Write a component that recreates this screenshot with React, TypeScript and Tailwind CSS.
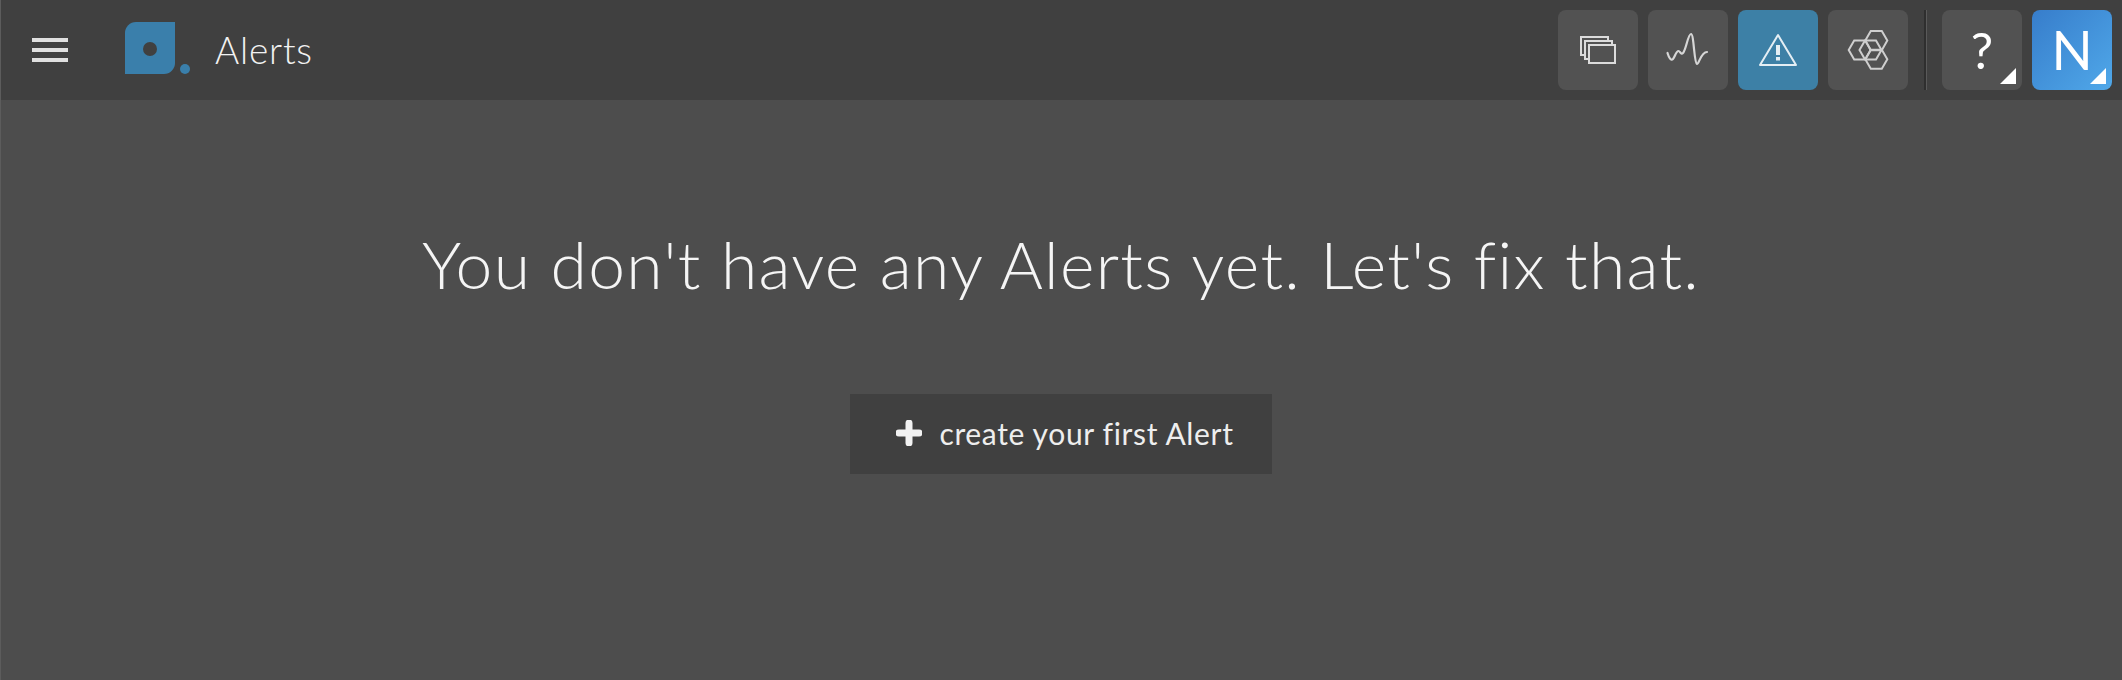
const Corner = () => (
  <svg className="absolute right-[6px] bottom-[6px]" width="16" height="16" viewBox="0 0 16 16">
    <path d="M16 0V16H0Z" fill="#ffffff" />
  </svg>
);

const hexagon = (cx: number, cy: number, r: number) => {
  const h = r * 0.866;
  return `M${cx - r} ${cy}L${cx - r / 2} ${cy - h}H${cx + r / 2}L${cx + r} ${cy}L${cx + r / 2} ${cy + h}H${cx - r / 2}Z`;
};

const NavButton: React.FC<{ active?: boolean; children: React.ReactNode }> = ({ active, children }) => (
  <div className={`relative flex h-20 w-20 items-center justify-center rounded-lg ${active ? "bg-[#3d80a6]" : "bg-[#525252]"}`}>
    {children}
  </div>
);

const App: React.FC = () => {
  return (
    <div className="flex h-[680px] w-full flex-col overflow-hidden border-l border-[#5c5c5c] bg-[#4d4d4d] font-['Lato',sans-serif] text-white">
      {/* Header */}
      <header className="flex h-[100px] shrink-0 items-center bg-[#404040] pr-[10px]">
        <div className="ml-[31px] flex w-9 flex-col gap-[6px]">
          <span className="h-1 bg-[#e0e0e0]" />
          <span className="h-1 bg-[#e0e0e0]" />
          <span className="h-1 bg-[#e0e0e0]" />
        </div>
        <svg className="mb-[2px] ml-[57px]" width="66" height="54" viewBox="0 0 66 54">
          <path d="M11 0H50V41A11 11 0 0 1 39 52H0V11A11 11 0 0 1 11 0Z" fill="#3a7fab" />
          <circle cx="25" cy="27" r="7" fill="#404040" />
          <circle cx="60" cy="47" r="5" fill="#3a7fab" />
        </svg>
        <span className="ml-[24px] text-[37px] font-light tracking-[0.8px] text-[#f2f2f2]">Alerts</span>

        <nav className="ml-auto flex items-center gap-[10px]">
          <NavButton>
            <svg width="80" height="80" viewBox="0 0 80 80" fill="#525252" stroke="#dcdcdc" strokeWidth="2">
              <rect x="23" y="27" width="27" height="18" />
              <rect x="27" y="31" width="27" height="18" />
              <rect x="31" y="35" width="26" height="18" />
            </svg>
          </NavButton>
          <NavButton>
            <svg width="80" height="80" viewBox="0 0 80 80" fill="none" stroke="#d6d6d6" strokeWidth="2.2" strokeLinecap="round">
              <path d="M19.5 43C21 48 23 51 25 49C27 47 28 41 30.5 41C32 41 33 45 35 43C38 40 40 24 43 24C46 24 46 53 49 54C51 54 53 42 59 42" />
            </svg>
          </NavButton>
          <NavButton active>
            <svg width="80" height="80" viewBox="0 0 80 80" fill="none">
              <path d="M40 25L22 55H58Z" stroke="#e4eef4" strokeWidth="2" strokeLinejoin="round" />
              <rect x="38" y="35" width="4" height="10" fill="#e4eef4" />
              <rect x="38" y="47" width="4" height="3.5" fill="#e4eef4" />
            </svg>
          </NavButton>
          <NavButton>
            <svg width="80" height="80" viewBox="0 0 80 80" fill="none" stroke="#cfcfcf" strokeWidth="2">
              <path d={hexagon(48.3, 30.6, 11)} />
              <path d={hexagon(31.7, 40, 11)} />
              <path d={hexagon(42.5, 40, 11)} />
              <path d={hexagon(48.3, 49.3, 11)} />
            </svg>
          </NavButton>
          <div className="mr-[5px] ml-[6px] h-20 w-[3px] border-l-2 border-[#2f2f2f] bg-[#5a5a5a]" />
          <NavButton>
            <span className="text-[50px] leading-none font-normal text-white">?</span>
            <Corner />
          </NavButton>
          <div className="relative flex h-20 w-20 items-center justify-center rounded-lg bg-gradient-to-br from-[#377dcb] to-[#50a8e9]">
            <span className="text-[54px] leading-none font-normal text-white">N</span>
            <Corner />
          </div>
        </nav>
      </header>

      {/* Empty state */}
      <main className="flex flex-col items-center pt-[124px] pr-px">
        <h1 className="text-[66px] leading-[80px] font-light tracking-[1.3px] text-[#f5f5f5]">You don't have any Alerts yet. Let's fix that.</h1>
        <button className="mt-[90px] flex h-20 w-[422px] items-center justify-center gap-[17px] bg-[#404040] pb-[2px] pl-2 text-[30px] tracking-[0.65px] text-[#eeeeee]">
          <svg width="26" height="26" viewBox="0 0 26 26">
            <path d="M13 3V23M3 13H23" stroke="#f2f2f2" strokeWidth="7" strokeLinecap="round" />
          </svg>
          create your first Alert
        </button>
      </main>
    </div>
  );
};

export default App;
